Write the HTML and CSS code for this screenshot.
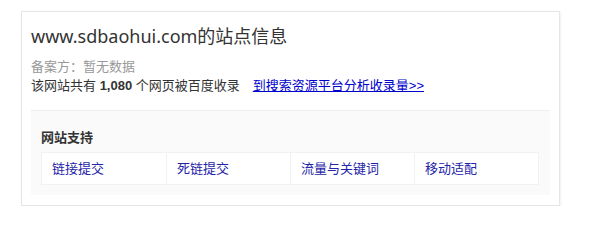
FILE: index.html
```html
<!DOCTYPE html>
<html lang="zh-CN">
<head>
<meta charset="utf-8">
<title>站点信息</title>
<link rel="stylesheet" href="styles.css">
</head>
<body>
<div class="card">
  <h2 class="title">www.sdbaohui.com的站点信息</h2>
  <div class="info">
    <p class="record">备案方：暂无数据</p>
    <p class="index">该网站共有 <b>1,080</b> 个网页被百度收录<a class="more" href="#">到搜索资源平台分析收录量&gt;&gt;</a></p>
  </div>
  <div class="panel">
    <h3 class="panel-title">网站支持</h3>
    <div class="tools">
      <a class="tool" href="#">链接提交</a>
      <a class="tool" href="#">死链提交</a>
      <a class="tool" href="#">流量与关键词</a>
      <a class="tool" href="#">移动适配</a>
    </div>
  </div>
</div>
</body>
</html>
```
FILE: styles.css
```css
html, body {
  margin: 0;
  padding: 0;
  background: #fff;
}
body {
  font-family: "Liberation Sans", "Noto Sans CJK SC", sans-serif;
  color: #333;
}
.card {
  margin: 11px 0 0 21px;
  width: 519px;
  padding: 12px 9px 10px 9px;
  border: 1px solid #e6e6e6;
  box-shadow: 1px 1px 2px rgba(0, 0, 0, 0.06);
}
.title {
  margin: 0;
  font-family: "Noto Sans", "Noto Sans CJK SC", sans-serif;
  font-size: 18px;
  line-height: 24px;
  font-weight: normal;
  color: #333;
}
.info {
  margin-top: 9px;
}
.info p {
  margin: 0;
  line-height: 19px;
}
.record {
  font-size: 13px;
  color: #999;
}
.index {
  font-size: 13px;
  color: #333;
}
.index b {
  font-weight: bold;
}
.more {
  margin-left: 13px;
  color: #0000cc;
  text-decoration: underline;
}
.panel {
  margin-top: 15px;
  border-top: 1px solid #eeeeee;
  background: #fafafa;
  padding: 17px 11px 10px 10px;
}
.panel-title {
  margin: 0 0 4px 0;
  font-size: 13px;
  line-height: 20px;
  font-weight: bold;
  color: #333;
}
.tools {
  display: grid;
  grid-template-columns: repeat(4, 1fr);
  background: #fff;
  border: 1px solid #f2f2f2;
}
.tool {
  display: block;
  line-height: 31px;
  padding-left: 10px;
  font-size: 13px;
  color: #2424a8;
  text-decoration: none;
  border-left: 1px solid #f2f2f2;
}
.tool:first-child {
  border-left: none;
}
```
